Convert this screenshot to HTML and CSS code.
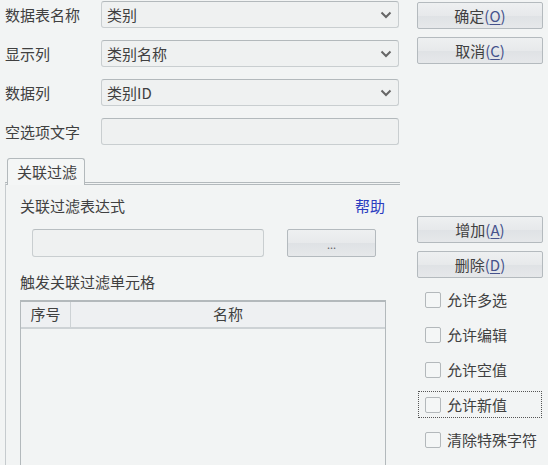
FILE: index.html
```html
<!DOCTYPE html>
<html>
<head>
<meta charset="utf-8">
<link rel="stylesheet" href="styles.css">
</head>
<body>
<div class="page">
  <div class="left">
    <div class="row">
      <div class="label">数据表名称</div>
      <div class="combo"><span>类别</span><svg class="chev" width="12" height="8" viewBox="0 0 12 8"><polyline points="1.5,1.5 6,6 10.5,1.5" fill="none" stroke="#666" stroke-width="2"/></svg></div>
    </div>
    <div class="row">
      <div class="label">显示列</div>
      <div class="combo"><span>类别名称</span><svg class="chev" width="12" height="8" viewBox="0 0 12 8"><polyline points="1.5,1.5 6,6 10.5,1.5" fill="none" stroke="#666" stroke-width="2"/></svg></div>
    </div>
    <div class="row">
      <div class="label">数据列</div>
      <div class="combo"><span>类别ID</span><svg class="chev" width="12" height="8" viewBox="0 0 12 8"><polyline points="1.5,1.5 6,6 10.5,1.5" fill="none" stroke="#666" stroke-width="2"/></svg></div>
    </div>
    <div class="row">
      <div class="label">空选项文字</div>
      <div class="combo input"></div>
    </div>

    <div class="tabs">
      <div class="tab">关联过滤</div>
    </div>
    <div class="panel">
      <div class="phead">
        <span>关联过滤表达式</span>
        <span class="help">帮助</span>
      </div>
      <div class="exprrow">
        <div class="expr"></div>
        <div class="btn dots">...</div>
      </div>
      <div class="trig">触发关联过滤单元格</div>
      <div class="table">
        <div class="thead">
          <div class="th c1">序号</div>
          <div class="th c2">名称</div>
        </div>
      </div>
    </div>
  </div>

  <div class="right">
    <div class="btn">确定<span class="acc">(<u>O</u>)</span></div>
    <div class="btn">取消<span class="acc">(<u>C</u>)</span></div>
    <div class="btn spaced">增加<span class="acc">(<u>A</u>)</span></div>
    <div class="btn">删除<span class="acc">(<u>D</u>)</span></div>
    <div class="chk"><span class="box"></span>允许多选</div>
    <div class="chk"><span class="box"></span>允许编辑</div>
    <div class="chk"><span class="box"></span>允许空值</div>
    <div class="chk focus"><span class="box"></span>允许新值</div>
    <div class="chk"><span class="box"></span>清除特殊字符</div>
  </div>
</div>
</body>
</html>
```

FILE: styles.css
```css
html, body {
  margin: 0;
  padding: 0;
  background: #f2f4f4;
  overflow: hidden;
  height: 465px;
}
body {
  font-family: "Noto Sans CJK SC", "Noto Sans", sans-serif;
  font-size: 15px;
  color: #404040;
}
.page {
  display: flex;
  padding: 1px 0 0 5px;
  height: 464px;
}
.left {
  width: 395px;
  display: flex;
  flex-direction: column;
}
.row {
  display: flex;
  align-items: center;
  height: 27px;
  margin-bottom: 12px;
  flex: none;
}
.label {
  width: 96px;
  line-height: 20px;
}
.combo {
  flex: 1;
  height: 27px;
  box-sizing: border-box;
  border: 1px solid #c9ced0;
  border-top-color: #b3b9bc;
  border-radius: 3px;
  background: #eff1f1;
  display: flex;
  align-items: center;
  justify-content: space-between;
  padding: 0 6px 0 5px;
  margin-right: 1px;
}
.combo span { line-height: 20px; }
.chev { display: block; }
.tabs {
  display: flex;
  padding-left: 2px;
  margin-top: 1px;
  flex: none;
}
.tab {
  width: 78px;
  height: 27px;
  box-sizing: border-box;
  border: 1px solid #b3b9bc;
  border-bottom: none;
  border-radius: 3px 3px 0 0;
  background: #f4f6f6;
  line-height: 25px;
  padding-left: 9px;
  margin-bottom: -3px;
  position: relative;
  z-index: 1;
}
.panel {
  flex: 1;
  min-height: 0;
  border-top: 3px double #b3b9bc;
  border-left: 1px solid #c6cbce;
  padding: 11px 15px 0 14px;
  display: flex;
  flex-direction: column;
}
.phead {
  display: flex;
  justify-content: space-between;
  line-height: 20px;
}
.help { color: #2b3cc0; }
.exprrow {
  display: flex;
  margin-top: 13px;
}
.expr {
  margin-left: 12px;
  width: 232px;
  height: 28px;
  box-sizing: border-box;
  border: 1px solid #c9ced0;
  border-top-color: #b8bec1;
  border-radius: 3px;
  background: #eff1f1;
}
.btn {
  height: 27px;
  box-sizing: border-box;
  border: 1px solid #b4babe;
  border-radius: 2px;
  background: linear-gradient(#eef0f1 0%, #e7e9eb 50%, #dfe2e5 51%, #e6e8ea 100%);
  display: flex;
  align-items: center;
  justify-content: center;
  line-height: 20px;
  margin-bottom: 8px;
  color: #404040;
  flex: none;
}
.acc { color: #45528c; }
.acc u { text-underline-offset: 2px; }
.dots {
  margin-left: 23px;
  width: 89px;
  height: 28px;
  margin-bottom: 0;
  font-size: 11px;
  color: #666;
  padding-top: 2px;
}
.trig {
  margin-top: 15px;
  line-height: 20px;
}
.table {
  margin-top: 8px;
  width: 366px;
  flex: 1;
  box-sizing: border-box;
  border: 1px solid #b3b9bc;
  border-top-width: 2px;
  border-bottom: none;
}
.thead {
  display: flex;
  height: 25px;
  background: #eef0f2;
  border-bottom: 2px solid #cdd2d5;
}
.th {
  line-height: 24px;
  text-align: center;
}
.c1 {
  width: 49px;
  border-right: 1px solid #cdd2d5;
}
.c2 { flex: 1; }
.right {
  width: 126px;
  margin-left: 17px;
  padding-top: 1px;
  display: flex;
  flex-direction: column;
}
.spaced { margin-top: 144px; }
.chk {
  height: 27px;
  box-sizing: border-box;
  display: flex;
  align-items: center;
  padding-left: 6px;
  margin-bottom: 8px;
  line-height: 20px;
  border: 1px solid transparent;
  margin-left: 1px;
  margin-right: 1px;
  flex: none;
}
.focus {
  border: 1px dotted #555;
}
.box {
  width: 16px;
  height: 16px;
  box-sizing: border-box;
  border: 1px solid #b3b8bb;
  border-radius: 2px;
  background: #f4f6f6;
  margin-right: 6px;
}
```
